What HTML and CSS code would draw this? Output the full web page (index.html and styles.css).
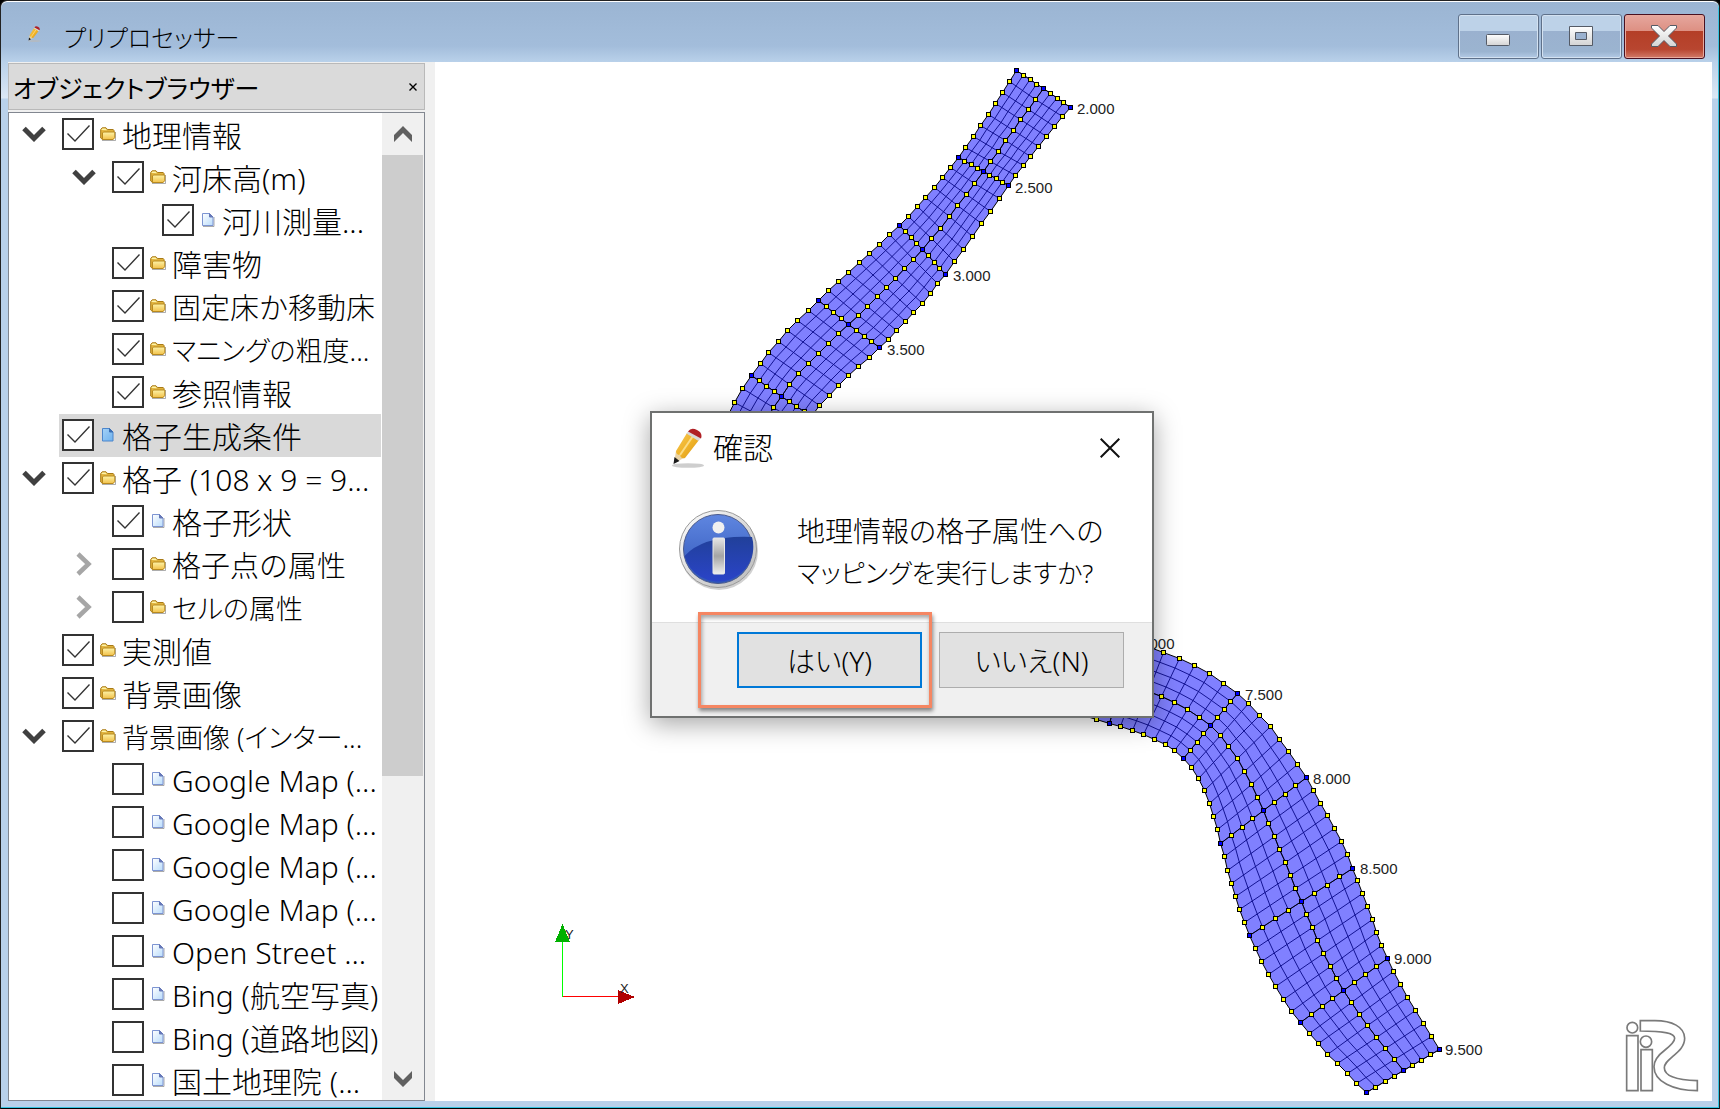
FILE: index.html
```html
<!DOCTYPE html>
<html lang="ja">
<head>
<meta charset="utf-8">
<title>プリプロセッサー</title>
<link rel="stylesheet" href="styles.css">
</head>
<body>
<svg class="defs" aria-hidden="true">
  <defs>
    <linearGradient id="gFolder" x1="0" y1="0" x2="0" y2="1"><stop offset="0" stop-color="#fdf3a8"/><stop offset="1" stop-color="#f2c14a"/></linearGradient>
    <linearGradient id="gDoc" x1="0" y1="0" x2="1" y2="1"><stop offset="0" stop-color="#ffffff"/><stop offset="1" stop-color="#b9dcfb"/></linearGradient>
    <linearGradient id="gDocSel" x1="0" y1="0" x2="1" y2="1"><stop offset="0" stop-color="#a5d2f7"/><stop offset="1" stop-color="#6fb2ee"/></linearGradient>
    <linearGradient id="gPencil" x1="0" y1="0" x2="1" y2="1"><stop offset="0" stop-color="#f5c75c"/><stop offset=".5" stop-color="#f0b429"/><stop offset="1" stop-color="#d99518"/></linearGradient>
    <linearGradient id="gRing" x1="0" y1="0" x2="1" y2="1"><stop offset="0" stop-color="#ffffff"/><stop offset="1" stop-color="#b8b8b8"/></linearGradient>
    <linearGradient id="gBlue" x1="0" y1="0" x2="0" y2="1"><stop offset="0" stop-color="#5f86e0"/><stop offset="1" stop-color="#2f55b8"/></linearGradient>
    <linearGradient id="gBlue2" x1="0" y1="0" x2="0" y2="1"><stop offset="0" stop-color="#21409a"/><stop offset="1" stop-color="#2a44c8"/></linearGradient>
    <linearGradient id="gStem" x1="0" y1="0" x2="0" y2="1"><stop offset="0" stop-color="#e6e6e6"/><stop offset=".5" stop-color="#a4a4a4"/><stop offset="1" stop-color="#efefef"/></linearGradient>
    <linearGradient id="gGlyph" x1="0" y1="0" x2="0" y2="1"><stop offset="0" stop-color="#ffffff"/><stop offset="1" stop-color="#d4d4d4"/></linearGradient>
    <symbol id="folder" viewBox="0 0 16 14">
      <path d="M2 13.500H15.500V5" fill="none" stroke="#777" stroke-opacity=".6"/>
      <path d="M.7 11V2.500L2.200.8H6L7.500 2.500H13.200L14 3.500V11L12.500 12.500H2.500Z" fill="#e0b23c" stroke="#a87a16"/>
      <path d="M1.500 3V2.500L2.500 1.500H5.500L7 3.200Z" fill="#fdf3a8"/>
      <path d="M3.500 5H14.800V10.500L13.200 12.500H2.500V6Z" fill="url(#gFolder)" stroke="#b98a1e"/>
    </symbol>
    <symbol id="doc" viewBox="0 0 16 14">
      <path d="M3 13.500H14V4" fill="none" stroke="#888" stroke-opacity=".7"/>
      <path d="M2.500.5H9.500L13 4V12.500H2.500Z" fill="url(#gDoc)" stroke="#7c94d2"/>
      <path d="M9.500.5V4H13Z" fill="#6678b8" stroke="#6678b8"/>
    </symbol>
    <symbol id="docsel" viewBox="0 0 16 14">
      <path d="M2.500.5H9.500L13 4V13H2.500Z" fill="url(#gDocSel)" stroke="#4c86cc"/>
      <path d="M9.500.5V4H13Z" fill="#3b6fb4" stroke="#3b6fb4"/>
    </symbol>
    <symbol id="down" viewBox="0 0 24 16"><path d="M2 2.500L12 12.500L22 2.500" fill="none" stroke="currentColor" stroke-width="5"/></symbol>
    <symbol id="right" viewBox="0 0 16 24"><path d="M2 2L12.500 12L2 22" fill="none" stroke="currentColor" stroke-width="4.500"/></symbol>
    <symbol id="pencil" viewBox="0 0 34 40">
      <ellipse cx="18" cy="37.500" rx="16" ry="2.300" fill="#b9b9b9" opacity=".7"/>
      <path d="M4 35L6 23L14 30Z" fill="#ead3a4"/>
      <path d="M3.500 36L4.500 29L9.500 33Z" fill="#1b1b1b"/>
      <path d="M6 23L17 5L29 12L15 30Q11 31 10 27Q6 27 6 23Z" fill="url(#gPencil)"/>
      <path d="M10 27L23 8" stroke="#fbdc86" stroke-width="2"/>
      <path d="M16.500 5.500L18.500 3L31 10L28.500 13Z" fill="#d8d8d8"/>
      <path d="M18 3.500Q21-1 27 2Q33 5 31 10.500Z" fill="#b01f24"/>
    </symbol>
  </defs>
</svg>

<div class="window">
  <header class="titlebar">
    <svg class="titlebar-icon"><use href="#pencil"/></svg>
    <h1 class="titlebar-text">プリプロセッサー</h1>
    <div class="controls">
      <button class="ctl" aria-label="最小化"><svg viewBox="0 0 81 45"><rect x="28.500" y="20.500" width="23" height="11" rx="1" fill="url(#gGlyph)" stroke="#555b66"/></svg></button>
      <button class="ctl" aria-label="最大化"><svg viewBox="0 0 81 45"><path fill-rule="evenodd" d="M28.500 12.500H51.500V31.500H28.500ZM34.500 18.500V25.500H45.500V18.500Z" fill="url(#gGlyph)" stroke="#555b66"/></svg></button>
      <button class="ctl ctl-close" aria-label="閉じる"><svg viewBox="0 0 81 45"><path d="M27.500 11.500H34L40 17.500L46 11.500H52.500V14L44.500 22L52.500 30V32.500H46L40 26.500L34 32.500H27.500V30L35.500 22L27.500 14Z" fill="url(#gGlyph)" stroke="#555b66"/></svg></button>
    </div>
  </header>

  <main class="content">
    <aside class="dock">
      <div class="dock-head">
        <h2 class="dock-title">オブジェクトブラウザー</h2>
        <button class="dock-close" aria-label="パネルを閉じる"><svg viewBox="0 0 8 8"><path d="M.5.5L7.500 7.500M7.500.5L.5 7.500" stroke="#000" stroke-width="1.400"/></svg></button>
      </div>
      <div class="tree-box">
        <ul class="tree">
          <li class="row"><button class="toggle" aria-label="折りたたむ"><svg class="down"><use href="#down"/></svg></button><label class="item"><input type="checkbox" checked><svg class="icon"><use href="#folder"/></svg><span>地理情報</span></label></li>
          <li class="row l1"><button class="toggle" aria-label="折りたたむ"><svg class="down"><use href="#down"/></svg></button><label class="item"><input type="checkbox" checked><svg class="icon"><use href="#folder"/></svg><span>河床高(m)</span></label></li>
          <li class="row l2"><label class="item"><input type="checkbox" checked><svg class="icon"><use href="#doc"/></svg><span>河川測量...</span></label></li>
          <li class="row l1"><label class="item"><input type="checkbox" checked><svg class="icon"><use href="#folder"/></svg><span>障害物</span></label></li>
          <li class="row l1"><label class="item mixed"><input type="checkbox" checked><svg class="icon"><use href="#folder"/></svg><span>固定床か移動床</span></label></li>
          <li class="row l1"><label class="item kana"><input type="checkbox" checked><svg class="icon"><use href="#folder"/></svg><span>マニングの粗度...</span></label></li>
          <li class="row l1"><label class="item"><input type="checkbox" checked><svg class="icon"><use href="#folder"/></svg><span>参照情報</span></label></li>
          <li class="row"><label class="item selected"><input type="checkbox" checked><svg class="icon"><use href="#docsel"/></svg><span>格子生成条件</span></label></li>
          <li class="row"><button class="toggle" aria-label="折りたたむ"><svg class="down"><use href="#down"/></svg></button><label class="item"><input type="checkbox" checked><svg class="icon"><use href="#folder"/></svg><span>格子 (108 x 9 = 9...</span></label></li>
          <li class="row l1"><label class="item"><input type="checkbox" checked><svg class="icon"><use href="#doc"/></svg><span>格子形状</span></label></li>
          <li class="row l1"><button class="toggle closed" aria-label="展開する"><svg class="right"><use href="#right"/></svg></button><label class="item mixed"><input type="checkbox"><svg class="icon"><use href="#folder"/></svg><span>格子点の属性</span></label></li>
          <li class="row l1"><button class="toggle closed" aria-label="展開する"><svg class="right"><use href="#right"/></svg></button><label class="item kana"><input type="checkbox"><svg class="icon"><use href="#folder"/></svg><span>セルの属性</span></label></li>
          <li class="row"><label class="item"><input type="checkbox" checked><svg class="icon"><use href="#folder"/></svg><span>実測値</span></label></li>
          <li class="row"><label class="item"><input type="checkbox" checked><svg class="icon"><use href="#folder"/></svg><span>背景画像</span></label></li>
          <li class="row"><button class="toggle" aria-label="折りたたむ"><svg class="down"><use href="#down"/></svg></button><label class="item kana"><input type="checkbox" checked><svg class="icon"><use href="#folder"/></svg><span>背景画像 (インター...</span></label></li>
          <li class="row l1"><label class="item"><input type="checkbox"><svg class="icon"><use href="#doc"/></svg><span>Google Map (...</span></label></li>
          <li class="row l1"><label class="item"><input type="checkbox"><svg class="icon"><use href="#doc"/></svg><span>Google Map (...</span></label></li>
          <li class="row l1"><label class="item"><input type="checkbox"><svg class="icon"><use href="#doc"/></svg><span>Google Map (...</span></label></li>
          <li class="row l1"><label class="item"><input type="checkbox"><svg class="icon"><use href="#doc"/></svg><span>Google Map (...</span></label></li>
          <li class="row l1"><label class="item"><input type="checkbox"><svg class="icon"><use href="#doc"/></svg><span>Open Street ...</span></label></li>
          <li class="row l1"><label class="item"><input type="checkbox"><svg class="icon"><use href="#doc"/></svg><span>Bing (航空写真)</span></label></li>
          <li class="row l1"><label class="item"><input type="checkbox"><svg class="icon"><use href="#doc"/></svg><span>Bing (道路地図)</span></label></li>
          <li class="row l1"><label class="item"><input type="checkbox"><svg class="icon"><use href="#doc"/></svg><span>国土地理院 (...</span></label></li>
        </ul>
        <div class="scroll">
          <button class="scroll-btn" aria-label="上へ"><svg viewBox="0 0 18 16"><path d="M0 16V9L9 0L18 9V16L9 7Z" fill="#606060"/></svg></button>
          <div class="scroll-track"><div class="scroll-thumb"></div></div>
          <button class="scroll-btn" aria-label="下へ"><svg viewBox="0 0 18 16"><path d="M0 0V7L9 16L18 7V0L9 9Z" fill="#606060"/></svg></button>
        </div>
      </div>
    </aside>

    <section class="view">
      <svg class="scene" viewBox="435 62 1277 1039" preserveAspectRatio="xMinYMin meet">
        <g id="mesh"></g>
        <g class="chainage">
          <text x="1077" y="114">2.000</text>
          <text x="1015" y="193">2.500</text>
          <text x="953" y="281">3.000</text>
          <text x="887" y="355">3.500</text>
          <text x="1137" y="649">7.000</text>
          <text x="1245" y="700">7.500</text>
          <text x="1313" y="784">8.000</text>
          <text x="1360" y="874">8.500</text>
          <text x="1394" y="964">9.000</text>
          <text x="1445" y="1055">9.500</text>
        </g>
        <g shape-rendering="crispEdges">
          <path d="M562.500 942V997" stroke="#00ff00" fill="none"/>
          <path d="M563 996.500H618" stroke="#ff0000" fill="none"/>
          <path d="M562.500 924L570 942H555Z" fill="#00b000"/>
          <path d="M635 997L618 1004V990Z" fill="#b00000"/>
        </g>
        <g class="axis"><text x="565" y="939">Y</text><text x="620" y="993">X</text></g>
        <g transform="translate(1600 1000) scale(.3333)" fill="none" stroke="#7a7a7a" stroke-width="5">
          <circle cx="97" cy="83" r="16"/><circle cx="138" cy="125" r="17"/>
          <path d="M80 107H114V272H80ZM123 149H157V272H123Z"/>
          <path d="M121 62H165C215 62 254 80 254 115C254 140 235 155 215 172C200 185 193 192 193 203C193 228 235 240 292 242V272C220 272 162 245 162 200C162 180 175 165 195 150C213 136 224 125 224 115C224 100 195 93 121 93Z"/>
        </g>
      </svg>
    </section>
  </main>

  <div class="dialog" role="dialog" aria-labelledby="dlg-title">
    <div class="dialog-head">
      <svg class="dialog-icon"><use href="#pencil"/></svg>
      <h2 class="dialog-title" id="dlg-title">確認</h2>
      <button class="dialog-close" aria-label="閉じる"><svg viewBox="0 0 20 20"><path d="M.7.7L19.300 19.300M19.300.7L.7 19.300" stroke="#111" stroke-width="2"/></svg></button>
    </div>
    <div class="dialog-body">
      <svg class="info" viewBox="0 0 80 82">
        <circle cx="40" cy="42" r="39" fill="#000" opacity=".18"/>
        <circle cx="39" cy="40" r="38.500" fill="url(#gRing)" stroke="#9a9a9a"/>
        <circle cx="39" cy="40" r="34.500" fill="url(#gBlue)" stroke="#4a5a8c"/>
        <path d="M5.500 47Q25 26 73 28A34.500 34.500 0 0 1 5.500 47Z" fill="url(#gBlue2)"/>
        <circle cx="39.500" cy="18.500" r="6" fill="#f0f0f0"/>
        <rect x="34" y="29" width="11.500" height="36" rx="1" fill="url(#gStem)" stroke="#e8e8e8"/>
      </svg>
      <p class="message">地理情報の格子属性への<br><span class="message-kana">マッピングを実行しますか?</span></p>
    </div>
    <div class="dialog-foot">
      <button class="btn btn-default">はい(Y)</button>
      <button class="btn">いいえ(N)</button>
    </div>
    <div class="callout"></div>
  </div>
</div>
<script src="mesh.js"></script>
</body>
</html>
```
FILE: styles.css
```css
* { box-sizing: border-box; }

body {
  margin: 0;
  font-family: "Noto Sans", "Noto Sans CJK JP", sans-serif;
  font-size: 28px;
  color: #000;
  background: #000;
}

h1, h2, p, ul { margin: 0; padding: 0; font-weight: 300; }
button { padding: 0; border: 0; background: none; font: inherit; color: inherit; }
svg { display: block; }
.defs { position: absolute; width: 0; height: 0; }

.window {
  position: relative;
  display: flex;
  flex-direction: column;
  height: 100vh;
  padding: 0 7px;
  border: 1px solid #222;
  border-bottom-color: #000;
  border-radius: 7px 7px 0 0;
  background: linear-gradient(#9bb5d3 0, #a3bddb 45px, #b9d1ea 61px, #dbe7f4 97px, #b9d1ea 98px);
  box-shadow: inset 0 1px #fff, inset -1px -1px #35c3e0;
}

.titlebar {
  display: flex;
  align-items: center;
  flex: none;
  height: 61px;
  padding: 13px 7px 3px 19px;
}
.titlebar-icon { width: 14px; height: 16px; margin-bottom: 6px; }
.titlebar-text {
  flex: 1;
  margin-left: 23px;
  font-family: "Noto Sans CJK JP", sans-serif;
  font-size: 24px;
  line-height: 36px;
  font-feature-settings: "palt";
}
.controls { display: flex; gap: 2px; }
.ctl {
  width: 81px;
  height: 45px;
  border: 1px solid #5f718a;
  border-radius: 3px;
  background: linear-gradient(#bdd2e8 38%, #9ab1cf 38%, #9bb4d0 85%, #b4cbe6);
  box-shadow: inset 0 0 0 1px #d4e2f1;
}
.ctl svg { margin: -1px; width: 81px; height: 45px; }
.ctl-close {
  border-color: #4a1020;
  background: linear-gradient(#e6a79e, #dd8f82 38%, #b43e27 38%, #b84630 80%, #d27a68);
  box-shadow: inset 0 0 0 1px #e8a99d;
}

.content {
  display: flex;
  flex: 1;
  min-height: 0;
  margin-bottom: 7px;
  background: #fff;
}

.dock {
  display: flex;
  flex-direction: column;
  flex: none;
  gap: 2px;
  width: 427px;
  padding: 1px 10px 0 0;
  background: #f0f0f0;
}
.dock-head {
  display: flex;
  align-items: center;
  justify-content: space-between;
  height: 47px;
  padding: 0 7px 0 4px;
  border: 1px solid #b9b9b9;
  background: #dadada;
}
.dock-title {
  font-family: "Noto Sans CJK JP", sans-serif;
  font-weight: 400;
  font-size: 25px;
  line-height: 40px;
  font-feature-settings: "palt";
}
.dock-close svg { width: 8px; height: 8px; }

.tree-box {
  display: flex;
  flex: 1;
  min-height: 0;
  border: 1px solid #828790;
  background: #fff;
}
.tree { flex: 1; min-width: 0; overflow: hidden; list-style: none; }
.row { position: relative; display: flex; height: 43px; padding-left: 50px; }
.l1 { padding-left: 100px; }
.l2 { padding-left: 150px; }
.toggle {
  display: flex;
  align-items: center;
  justify-content: center;
  width: 50px;
  height: 42px;
  margin-left: -50px;
  color: #404040;
}
.closed { color: #a6a6a6; }
.down { width: 24px; height: 16px; }
.right { width: 16px; height: 24px; }
.item {
  display: flex;
  align-items: center;
  flex: 1;
  min-width: 0;
  margin-right: 1px;
  padding: 0 0 1px 3px;
  font-weight: 300;
  font-size: 30px;
  white-space: nowrap;
}
.item span { padding: 4px 0 0 6px; line-height: 38px; }
.mixed { font-size: 29px; }
.kana { font-size: 27px; font-feature-settings: "palt"; }
.selected { background: #d9d9d9; }
.item input {
  appearance: none;
  flex: none;
  width: 32px;
  height: 32px;
  margin: 0;
  border: 2px solid #333;
  background: #fff;
}
.item input:checked::before {
  content: "";
  display: block;
  width: 28px;
  height: 28px;
  background: #333;
  clip-path: polygon(3px 14px, 4px 13px, 11px 20px, 25px 5px, 26px 6px, 11px 22px);
}
.icon { flex: none; width: 16px; height: 14px; margin-left: 6px; }

.scroll { display: flex; flex-direction: column; width: 42px; background: #f0f0f0; }
.scroll-btn { display: grid; place-items: center; height: 42px; padding-right: 1px; }
.scroll-btn svg { width: 18px; height: 16px; }
.scroll-track { display: grid; grid-template-rows: 11fr 5fr; flex: 1; padding-right: 1px; }
.scroll-thumb { background: #cdcdcd; }

.view { flex: 1; min-width: 0; overflow: hidden; background: #fff; }
.scene { width: 100%; height: 100%; }
.chainage, .axis { font-family: "Liberation Sans", sans-serif; font-size: 15px; fill: #222; }
.axis { font-size: 13px; }

.dialog {
  position: absolute;
  left: 649px;
  top: 410px;
  width: 504px;
  border: 2px solid #6f7170;
  background: #fff;
  box-shadow: 0 6px 24px rgba(0, 0, 0, .35);
}
.dialog-head { display: flex; align-items: center; height: 69px; padding: 0 32px 0 18px; }
.dialog-icon { width: 34px; height: 40px; }
.dialog-title { flex: 1; margin-left: 9px; font-size: 30px; line-height: 40px; }
.dialog-close svg { width: 20px; height: 20px; }
.dialog-body { display: flex; align-items: center; gap: 38px; height: 140px; padding: 0 0 0 27px; }
.info { flex: none; width: 80px; height: 82px; margin-bottom: 4px; }
.message {
  font-size: 28px;
  line-height: 41px;
  white-space: nowrap;
  font-feature-settings: "palt";
}
.message-kana { font-size: 26px; }
.dialog-foot {
  display: flex;
  justify-content: flex-end;
  gap: 17px;
  height: 94px;
  padding: 9px 28px 28px;
  border-top: 1px solid #dfdfdf;
  background: #f0f0f0;
}
.btn {
  width: 185px;
  height: 56px;
  border: 1px solid #adadad;
  background: #e1e1e1;
  font-weight: 300;
  font-size: 28px;
  font-feature-settings: "palt";
}
.btn-default { border: 2px solid #0078d7; }
.callout {
  position: absolute;
  left: 46px;
  top: 199px;
  width: 234px;
  height: 96px;
  border: 3px solid #f58662;
  box-shadow: 1px 3px 4px rgba(0, 0, 0, .45), inset 1px 3px 4px rgba(0, 0, 0, .35);
  pointer-events: none;
}
```
FILE: mesh.js
```js
// River grid: each reach lists its two banks and the centre line,
// one point per cross section. "keys" are the surveyed sections.
const reaches = [
  {
    ox: 720, oy: 60, keys: [0, 8, 15, 23, 30],
    a: "889,31 868,64 847,97 826,130 805,163 781,196 760,229 736,262 715,292 691,322 667,352 643,382 616,412 592,439 565,469 538,496 508,523 478,553 448,580 418,607 385,637 355,664 325,691 295,721 265,751 232,781 202,811 175,844 145,877 121,910 94,946 67,985 43,1027 22,1070",
    c: "970,85 946,118 925,148 901,178 880,211 856,241 835,274 811,304 790,334 763,370 739,403 712,436 688,469 661,505 634,535 607,568 580,598 553,625 526,655 499,682 472,709 442,739 415,766 385,793 355,820 325,850 295,880 265,910 235,940 208,973 184,1009 160,1042 138,1078 116,1114",
    b: "1051,142 1027,169 1003,199 979,229 955,259 931,289 910,316 886,346 865,376 838,415 811,454 784,490 757,529 730,568 703,604 676,643 652,670 631,700 607,730 580,757 556,784 529,811 505,838 478,862 448,892 415,919 385,946 355,976 328,1006 298,1036 273,1068 250,1100 228,1130 206,1160"
  },
  {
    ox: 1080, oy: 630, keys: [3, 10, 17, 24, 31, 38],
    a: "2,14 52,20 102,28 152,38 202,50 250,67 298,85 343,106 388,130 430,160 472,190 505,220 538,256 571,289 598,328 625,364 652,403 679,442 700,481 721,520 742,556 763,595 784,634 802,673 817,715 832,751 847,790 862,829 877,868 890,907 904,946 922,985 940,1024 961,1063 982,1102 1006,1141 1030,1180 1054,1219 1078,1258",
    c: "-6,135 36,142 80,150 120,160 163,172 204,184 244,199 283,217 322,238 358,262 391,286 421,316 445,349 472,385 493,424 514,463 532,502 550,541 565,580 583,619 598,658 616,697 631,736 646,775 664,814 679,853 697,892 712,931 730,970 751,1009 769,1045 790,1081 814,1117 838,1153 862,1186 889,1222 916,1255 943,1288 970,1321",
    b: "-29,246 10,256 49,268 88,280 121,289 157,301 190,313 223,328 256,343 283,361 310,385 334,412 355,445 373,481 388,520 400,559 412,598 421,640 433,679 442,721 454,760 466,799 478,838 493,877 508,916 526,955 544,994 565,1033 586,1069 610,1108 634,1144 661,1177 688,1210 715,1240 742,1273 772,1300 802,1330 829,1360 859,1387"
  }
];

const NS = "http://www.w3.org/2000/svg";
const mesh = document.getElementById("mesh");

function add(name, attrs) {
  const el = document.createElementNS(NS, name);
  for (const k in attrs) el.setAttribute(k, attrs[k]);
  mesh.appendChild(el);
}

function line(points) {
  return "M" + points.map(p => p.join(" ")).join("L");
}

reaches.forEach(r => {
  const read = s => s.split(" ").map(p => {
    const [x, y] = p.split(",").map(Number);
    return [Math.floor(x / 3) + r.ox + 0.5, Math.floor(y / 3) + r.oy + 0.5];
  });
  const a = read(r.a), b = read(r.b), c = read(r.c);
  const mix = (p, q, t) => [p[0] + (q[0] - p[0]) * t, p[1] + (q[1] - p[1]) * t];
  const rows = a.map((p, i) => [
    p, mix(p, c[i], 0.25), mix(p, c[i], 0.5), mix(p, c[i], 0.75),
    c[i], mix(c[i], b[i], 0.25), mix(c[i], b[i], 0.5), mix(c[i], b[i], 0.75), b[i]
  ]);

  add("path", { d: line(a.concat([...b].reverse())) + "Z", fill: "#8080ff" });
  let thin = rows.map(line).join("");
  for (let j = 1; j < 8; j++) thin += line(rows.map(row => row[j]));
  add("path", { d: thin, fill: "none", stroke: "#000080", "stroke-opacity": 0.85 });
  const keyRows = r.keys.map(k => rows[k]);
  add("path", { d: [a, b, c].map(line).join("") + keyRows.map(line).join(""), fill: "none", stroke: "#000" });

  rows.forEach((row, i) => {
    const key = r.keys.includes(i);
    row.forEach((p, j) => {
      if (!key && j % 4) return;
      const fill = key && j % 4 === 0 ? "#0000ff" : "#ffff00";
      add("rect", { x: Math.floor(p[0]) - 1.5, y: Math.floor(p[1]) - 1.5, width: 4, height: 4, fill, stroke: "#000", "shape-rendering": "crispEdges" });
    });
  });
});
```
